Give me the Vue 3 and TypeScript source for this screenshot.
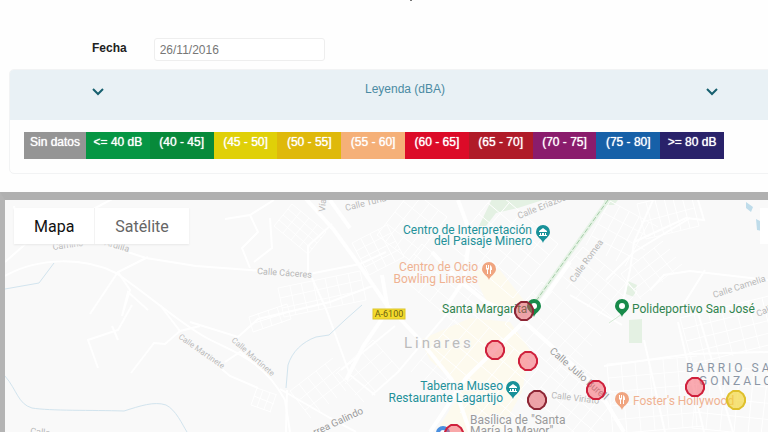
<script setup lang="ts">
import { ref } from 'vue'

interface Level { label: string; tone: string }
interface Label { text: string; x: number; y: number; angle?: number; kind: string }
interface Pin { x: number; y: number; kind: string; icon: string }
interface Sensor { x: number; y: number; tone: string }

const date = ref('26/11/2016')
const open = ref(true)
const view = ref('Mapa')

const levels: Level[] = [
  { label: 'Sin datos', tone: 'none' },
  { label: '<= 40 dB', tone: 'l40' },
  { label: '(40 - 45]', tone: 'l45' },
  { label: '(45 - 50]', tone: 'l50' },
  { label: '(50 - 55]', tone: 'l55' },
  { label: '(55 - 60]', tone: 'l60' },
  { label: '(60 - 65]', tone: 'l65' },
  { label: '(65 - 70]', tone: 'l70' },
  { label: '(70 - 75]', tone: 'l75' },
  { label: '(75 - 80]', tone: 'l80' },
  { label: '>= 80 dB', tone: 'l85' },
]

// Street blocks: a rotated lattice of w x h around a centre.
function lattice(cx: number, cy: number, w: number, h: number, deg: number, du: number, dv: number): string {
  const a = (deg * Math.PI) / 180
  const at = (u: number, v: number) =>
    `${Math.round(cx + u * Math.cos(a) - v * Math.sin(a))} ${Math.round(cy + u * Math.sin(a) + v * Math.cos(a))}`
  let d = ''
  for (let u = -w / 2; u <= w / 2; u += du) d += `M${at(u, -h / 2)}L${at(u, h / 2)}`
  for (let v = -h / 2; v <= h / 2; v += dv) d += `M${at(-w / 2, v)}L${at(w / 2, v)}`
  return d
}

const blocks: string[] = [
  lattice(300, 229, 44, 28, 40, 11, 7),
  lattice(322, 294, 84, 30, -12, 12, 10),
  lattice(378, 250, 40, 36, -28, 10, 9),
  lattice(412, 226, 44, 56, 38, 11, 14),
  lattice(322, 388, 54, 34, -38, 11, 12),
  lattice(264, 400, 22, 18, 20, 7, 9),
  lattice(270, 318, 40, 16, -18, 10, 8),
  lattice(368, 372, 40, 50, 48, 14, 16),
  lattice(440, 285, 80, 40, 40, 14, 13),
  lattice(505, 245, 80, 70, 40, 16, 14),
  lattice(480, 375, 110, 84, 40, 16, 17),
  lattice(553, 330, 80, 56, 42, 14, 14),
  lattice(622, 236, 54, 50, 28, 11, 13),
  lattice(668, 215, 54, 36, -14, 9, 18),
  lattice(596, 286, 70, 44, 40, 14, 12),
  lattice(652, 270, 54, 32, -38, 14, 10),
  lattice(576, 400, 70, 60, 40, 13, 14),
  lattice(655, 395, 90, 70, -5, 14, 14),
  lattice(735, 330, 100, 50, -14, 14, 12),
  lattice(735, 400, 80, 64, 6, 14, 16),
]

const lanes: string[] = [
  'M5 276C40 256 86 258 116 273C150 296 178 322 205 337S262 358 285 400L290 432',
  'M14 206C18 230 22 250 42 239M5 262L38 233L84 214L118 196',
  'M112 247L146 258L196 266L250 270L304 275L360 264L386 252',
  'M90 314L118 272L148 257M118 272L130 290L122 316L128 292L148 310',
  'M132 305L118 330L88 340L98 368M112 326L118 340',
  'M160 305L180 331L200 326M180 331L165 344L154 343L131 373',
  'M190 322L238 337L258 319L330 302L375 285',
  'M205 355L230 376L258 388M225 362L240 352L270 374',
  'M225 219L250 215L274 200M250 215L258 232L242 248L250 268M270 218L272 248L254 262',
  'M308 274L308 246L332 224M312 278L326 309L350 375L375 395',
  'M341 370L395 326M372 395L398 372L450 310',
  'M280 389L330 418L356 432M287 390L286 432',
  'M653 200L634 242L630 270L622 306M634 242L686 218L704 220L698 200',
  'M606 280L634 252L690 218M570 295L622 325M650 290L664 275L690 271L768 280',
  'M680 310L705 270M604 366L690 354L768 352',
  'M644 340L665 432M678 322L704 432M698 313L733 432',
]

const avenues: string[] = [
  'M306 199L334 230L360 266L386 304L420 340L452 380L470 432',
  'M330 200L350 228M382 275L388 310L364 345L346 380',
  'M432 252L456 278L486 302L520 318L556 350L596 386L624 432',
  'M458 200L470 232L464 280L448 304',
  'M430 432L466 378L536 310L570 262',
]

const rivers: string[] = [
  'M5 289L39 283L54 263',
  'M5 376C17 390 18 404 32 408C50 411 92 410 124 411C140 406 154 401 166 405C176 410 182 424 187 432',
  'M362 305L345 320L329 335L316 337C302 342 292 352 288 365L286 388',
]

const labels: Label[] = [
  { text: 'Calle Cáceres', x: 257, y: 274, angle: 4, kind: 'street' },
  { text: 'Calle Turia', x: 346, y: 211, angle: -14, kind: 'street' },
  { text: 'Vía', x: 325, y: 212, angle: -85, kind: 'street' },
  { text: 'Camino', x: 53, y: 250, angle: -8, kind: 'street' },
  { text: 'Ardilla', x: 104, y: 245, angle: 16, kind: 'street' },
  { text: 'Calle Martinete', x: 178, y: 338, angle: 35, kind: 'tiny' },
  { text: 'Calle Martinete', x: 231, y: 341, angle: 41, kind: 'tiny' },
  { text: 'Calle', x: 30, y: 434, angle: 6, kind: 'street' },
  { text: 'Correa Galindo', x: 304, y: 441, angle: -25, kind: 'road' },
  { text: 'Calle Eriazos', x: 519, y: 219, angle: -22, kind: 'street' },
  { text: 'Calle Romea', x: 574, y: 283, angle: -54, kind: 'street' },
  { text: 'Calle Camelia', x: 714, y: 298, angle: -18, kind: 'street' },
  { text: 'Calle', x: 758, y: 317, angle: -24, kind: 'street' },
  { text: 'Calle Julio Burell', x: 549, y: 352, angle: 41, kind: 'road' },
  { text: 'Calle Viriato', x: 551, y: 398, angle: 7, kind: 'street' },
  { text: 'Linares', x: 404, y: 348, kind: 'city' },
  { text: 'BARRIO SAN', x: 686, y: 372, kind: 'district' },
  { text: 'GONZALO', x: 699, y: 385, kind: 'district' },
  { text: 'Centro de Interpretación', x: 532, y: 234, kind: 'teal end' },
  { text: 'del Paisaje Minero', x: 532, y: 245, kind: 'teal end' },
  { text: 'Centro de Ocio', x: 478, y: 271, kind: 'orange end' },
  { text: 'Bowling Linares', x: 478, y: 283, kind: 'orange end' },
  { text: 'Santa Margarita', x: 442, y: 313, kind: 'green' },
  { text: 'Polideportivo San José', x: 632, y: 313, kind: 'green' },
  { text: 'Taberna Museo', x: 503, y: 390, kind: 'teal end' },
  { text: 'Restaurante Lagartijo', x: 503, y: 402, kind: 'teal end' },
  { text: "Foster's Hollywood", x: 633, y: 405, kind: 'orange' },
  { text: 'Basílica de "Santa', x: 470, y: 424, kind: 'grey' },
  { text: 'María la Mayor"', x: 470, y: 435, kind: 'grey' },
]

const pins: Pin[] = [
  { x: 543, y: 233, kind: 'teal', icon: 'museum' },
  { x: 513, y: 389, kind: 'teal', icon: 'museum' },
  { x: 489, y: 270, kind: 'orange', icon: 'food' },
  { x: 622, y: 400, kind: 'orange', icon: 'food' },
  { x: 622, y: 307, kind: 'green', icon: 'dot' },
  { x: 534, y: 307, kind: 'green', icon: 'dot' },
  { x: 443, y: 434, kind: 'blue', icon: 'dot' },
]

const sensors: Sensor[] = [
  { x: 524, y: 311, tone: 'dark' },
  { x: 495, y: 350, tone: 'red' },
  { x: 528, y: 361, tone: 'red' },
  { x: 537, y: 400, tone: 'dark' },
  { x: 596, y: 390, tone: 'red' },
  { x: 695, y: 387, tone: 'red' },
  { x: 736, y: 400, tone: 'yellow' },
  { x: 454, y: 434, tone: 'red' },
]

const octagon = '-3,-9 3,-9 7,-6 9,-2 9,2 7,6 3,9 -3,9 -7,6 -9,2 -9,-2 -7,-6'
</script>

<template>
  <main class="page">
    <header class="top"><span class="mark"></span></header>

    <div class="filter">
      <label for="fecha">Fecha</label>
      <input id="fecha" v-model="date" type="text" />
    </div>

    <section class="panel">
      <button class="panel-head" type="button" :aria-expanded="open" @click="open = !open">
        <svg class="chevron" viewBox="0 0 12 8"><path d="M1 1L6 6L11 1" /></svg>
        <span>Leyenda (dBA)</span>
        <svg class="chevron" viewBox="0 0 12 8"><path d="M1 1L6 6L11 1" /></svg>
      </button>
      <div v-if="open" class="panel-body">
        <ul class="scale">
          <li v-for="level in levels" :key="level.tone" :class="level.tone">{{ level.label }}</li>
        </ul>
      </div>
    </section>

    <section class="map">
      <svg class="canvas" viewBox="5 200 763 232" preserveAspectRatio="xMinYMin slice">
        <g class="zone">
          <path d="M470 268L500 270L530 308L516 318L486 300Z" />
          <path d="M420 340L470 318L510 322L530 350L522 392L500 432L436 432L462 390L430 360Z" />
        </g>
        <g class="park">
          <path d="M492 199L546 199L518 208L496 213L486 226L478 228Z" />
          <path d="M628 281L637 285L634 297L626 294Z" />
          <path d="M629 320L642 319L642 343L629 343Z" />
          <path d="M604 199L618 200L614 205L604 205Z" />
        </g>
        <path class="pond" d="M746 202L753 207L751 212L746 208ZM756 219L762 222L762 231L757 230Z" />
        <g class="blocks"><path v-for="d in blocks" :key="d" :d="d" /></g>
        <g class="lanes"><path v-for="d in lanes" :key="d" :d="d" /></g>
        <g class="rivers"><path v-for="d in rivers" :key="d" :d="d" /></g>
        <g class="avenues"><path v-for="d in avenues" :key="d" :d="d" /></g>
        <path class="rail-bed" d="M536 301L608 200" />
        <path class="rail" d="M536 301L608 200" />
        <path class="trail" d="M622 314L609 323" />

        <rect class="shield" x="373" y="309" width="32" height="10" />
        <text class="shield-text" x="389" y="317">A-6100</text>

        <text
          v-for="label in labels"
          :key="label.text + label.x"
          :class="label.kind"
          :transform="`translate(${label.x} ${label.y}) rotate(${label.angle ?? 0})`"
        >{{ label.text }}</text>

        <g v-for="pin in pins" :key="`${pin.x}-${pin.y}`" :class="['pin', pin.kind]" :transform="`translate(${pin.x} ${pin.y})`">
          <path d="M0 10C-1 6 -7 4 -7 -1A7 7 0 0 1 7 -1C7 4 1 6 0 10Z" />
          <path v-if="pin.icon === 'museum'" class="glyph" d="M-4 -2L0 -5L4 -2V-1H-4ZM-3 0H-2V2H-3ZM-1 0H1V2H-1ZM2 0H3V2H2ZM-4 2H4V3H-4Z" />
          <path v-else-if="pin.icon === 'food'" class="glyph" d="M-3 -5H-2V-2H-1V-5H0V-1L-1 0V4H-2V0L-3 -1ZM1 -5C3 -4 3 -2 3 0H2V4H1Z" />
          <circle v-else class="glyph" cy="-1" r="3" />
        </g>

        <g v-for="s in sensors" :key="`${s.x}-${s.y}`" :class="['sensor', s.tone]" :transform="`translate(${s.x} ${s.y})`">
          <polygon :points="octagon" />
        </g>
      </svg>

      <div class="switch">
        <button
          v-for="name in ['Mapa', 'Satélite']"
          :key="name"
          type="button"
          :class="{ active: view === name }"
          @click="view = name"
        >{{ name }}</button>
      </div>
      <div class="corner"></div>
    </section>
  </main>
</template>

<style>
body {
  background: #fefefe;
}
</style>

<style scoped>
.page {
  display: flex;
  flex-direction: column;
  min-height: 100vh;
  overflow: hidden;
  font-family: "Liberation Sans", Arial, sans-serif;
  font-size: 12px;
}
.top {
  display: flex;
  justify-content: center;
  height: 38px;
  padding-left: 54px;
}
.mark {
  width: 2px;
  height: 1px;
  background: #777;
}
.filter {
  display: flex;
  gap: 27px;
  padding-left: 92px;
}
.filter label {
  padding-top: 3px;
  color: #222;
  font-weight: bold;
  line-height: 14px;
}
.filter input {
  box-sizing: border-box;
  width: 171px;
  height: 23px;
  padding: 0 5px;
  border: 1px solid #eee;
  border-radius: 3px;
  background: #fff;
  color: #777;
  font: inherit;
}
.panel {
  flex: none;
  margin: 8px -33px 18px 9px;
  border: 1px solid #f2f3f4;
  border-radius: 5px;
  overflow: hidden;
}
.panel-head {
  display: flex;
  align-items: flex-start;
  justify-content: space-between;
  width: 100%;
  height: 50px;
  padding: 12px 82px;
  border: 0;
  background: #e9f1f5;
  color: #4b8ba3;
  font: inherit;
  line-height: 14px;
}
.chevron {
  width: 12px;
  height: 8px;
  margin-top: 6px;
  fill: none;
  stroke: #17606f;
  stroke-width: 2;
}
.panel-body {
  padding: 12px 14px 14px;
}
.scale {
  display: grid;
  grid-template-columns: 62px repeat(10, 1fr);
  width: 700px;
  margin: 0;
  padding: 0;
  list-style: none;
}
.scale li {
  height: 24px;
  padding-top: 3px;
  color: #fff;
  line-height: 14px;
  text-align: center;
  text-shadow: 0 0 1px #fff;
  white-space: nowrap;
}
.none { background: #959595; }
.l40 { background: #069644; }
.l45 { background: #078a3a; }
.l50 { background: #e0d008; }
.l55 { background: #dfb90b; }
.l60 { background: #f5b078; }
.l65 { background: #dc0b28; }
.l70 { background: #b01b28; }
.l75 { background: #8a1c6c; }
.l80 { background: #1660a8; }
.l85 { background: #29226a; }

.map {
  position: relative;
  flex: 1;
  min-height: 224px;
  border-top: 8px solid #b0b0b0;
  border-left: 5px solid #b4b4b4;
  background: #f9f9f9;
  font-family: Roboto, sans-serif;
}
.canvas {
  position: absolute;
  inset: 0;
  width: 100%;
  height: 100%;
}
.switch {
  position: absolute;
  top: 8px;
  left: 9px;
  display: flex;
  background: #fff;
  box-shadow: 0 1px 2px #e8e8e8;
}
.switch button {
  height: 36px;
  padding: 0 20px;
  border: 0;
  background: none;
  color: #666;
  font-family: inherit;
  font-size: 16px;
}
.switch button + button {
  border-left: 1px solid #f3f3f3;
}
.switch .active {
  color: #111;
}
.corner {
  position: absolute;
  top: 8px;
  right: 0;
  width: 8px;
  height: 36px;
  background: #fff;
}

.zone { fill: #fdfaee; }
.park { fill: #e4f1e3; }
.pond { fill: #bfdcea; }
.blocks, .lanes, .avenues, .rivers { fill: none; stroke: #fff; }
.blocks { stroke-width: 1; }
.lanes { stroke-width: 2; }
.avenues { stroke-width: 4; }
.rivers { stroke: #d2e4ee; stroke-width: 1; }
.rail-bed { stroke: #e6f3e6; stroke-width: 4; }
.rail { stroke: #a3cba6; stroke-width: 1; stroke-dasharray: 5 2; }
.trail { stroke: #d5ead5; stroke-width: 1; }

text {
  font-size: 12px;
  paint-order: stroke;
  stroke: #fafafa;
  stroke-width: 2;
}
.end { text-anchor: end; }
.street { fill: #b8b8b8; font-size: 9px; }
.tiny { fill: #bbb; font-size: 8px; }
.road { fill: #9c9c9c; font-size: 10px; }
.city { fill: #bcbcbc; font-size: 15px; letter-spacing: 3px; }
.district { fill: #8b96a5; letter-spacing: 3px; }
text.teal { fill: #239199; }
text.orange { fill: #efb292; }
text.green { fill: #31844f; }
text.grey { fill: #9a9a9a; }
.shield { fill: #f4db2c; stroke: #dcc52c; }
.shield-text { fill: #6d6212; stroke: none; font-size: 9px; text-anchor: middle; }

.pin.teal { fill: #189199; }
.pin.orange { fill: #f0a580; }
.pin.green { fill: #188a4a; }
.pin.blue { fill: #4a8fe0; }
.pin .glyph { fill: #fff; }

.sensor polygon { stroke-width: 2; stroke-linejoin: round; }
.red { fill: #f5566480; stroke: #cf203c; }
.dark { fill: #e04c5580; stroke: #8d2635; }
.yellow { fill: #f2d22aa0; stroke: #dfc02c; }
</style>
